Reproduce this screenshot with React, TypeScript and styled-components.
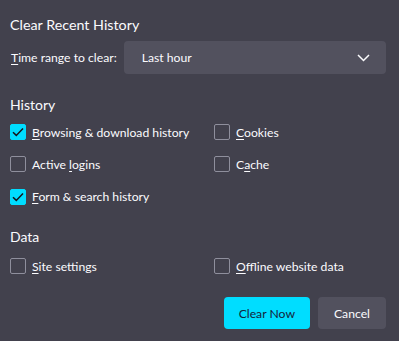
import React from 'react';
import styled, { createGlobalStyle } from 'styled-components';

const GlobalStyle = createGlobalStyle`
  html, body {
    margin: 0;
    background: #42414d;
  }
  body {
    font-family: Lato, "Open Sans", sans-serif;
    color: #fbfbfe;
  }
`;

const Dialog = styled.div`
  width: 399px;
  height: 341px;
  box-sizing: border-box;
  padding: 14px 13px 0 10px;
  display: flex;
  flex-direction: column;
`;

const Title = styled.h1`
  margin: 0;
  font-size: 14.3px;
  font-weight: 400;
  line-height: 22px;
`;

const TimeRow = styled.div`
  display: flex;
  align-items: center;
  gap: 7px;
  margin-top: 5px;
`;

const Label = styled.span`
  font-size: 12.2px;
  padding-left: 1px;
`;

const Select = styled.div`
  flex: 1;
  height: 33px;
  box-sizing: border-box;
  background: #52515e;
  border-radius: 4px;
  display: flex;
  align-items: center;
  justify-content: space-between;
  padding: 0 16px 0 18px;
  font-size: 12.2px;
`;

const SectionTitle = styled.h2<{ $gap: number }>`
  margin: ${p => p.$gap}px 0 0;
  font-size: 14px;
  font-weight: 400;
  line-height: 20px;
`;

const OptionGrid = styled.div<{ $gap: number }>`
  display: grid;
  grid-template-columns: 204px 1fr;
  grid-auto-rows: 32.3px;
  margin-top: ${p => p.$gap}px;
`;

const Option = styled.label`
  display: flex;
  align-items: center;
  gap: 6px;
  font-size: 12.2px;
`;

const Box = styled.span<{ $checked?: boolean }>`
  width: 16px;
  height: 16px;
  box-sizing: border-box;
  border-radius: 2px;
  border: 1px solid ${p => (p.$checked ? '#00ddff' : '#8f8f9d')};
  background: ${p => (p.$checked ? '#00ddff' : 'transparent')};
  display: flex;
  align-items: center;
  justify-content: center;
  flex-shrink: 0;
`;

const Key = styled.u`
  text-underline-offset: 2px;
`;

const Buttons = styled.div`
  display: flex;
  justify-content: flex-end;
  gap: 8px;
  margin-top: 15px;
`;

const Button = styled.button<{ $primary?: boolean }>`
  height: 32px;
  border: none;
  border-radius: 4px;
  font-family: inherit;
  font-size: 12.2px;
  padding: 0 ${p => (p.$primary ? 15 : 16)}px;
  background: ${p => (p.$primary ? '#00ddff' : '#52515e')};
  color: ${p => (p.$primary ? '#15223a' : '#fbfbfe')};
`;

const Check = () => (
  <svg width="12" height="10" viewBox="0 0 12 10">
    <path d="M1 5.2 L4.3 8.4 L11 1.4" fill="none" stroke="#15141a" strokeWidth="1.5" />
  </svg>
);

const Chevron = () => (
  <svg width="13" height="8" viewBox="0 0 13 8">
    <path d="M1 1 L6.5 6.5 L12 1" fill="none" stroke="#fbfbfe" strokeWidth="1.5" />
  </svg>
);

type Item = { pre: string; key: string; post: string; checked?: boolean };

const history: (Item | null)[] = [
  { pre: '', key: 'B', post: 'rowsing & download history', checked: true },
  { pre: '', key: 'C', post: 'ookies' },
  { pre: 'Active ', key: 'l', post: 'ogins' },
  { pre: 'C', key: 'a', post: 'che' },
  { pre: '', key: 'F', post: 'orm & search history', checked: true },
  null,
];

const data: Item[] = [
  { pre: '', key: 'S', post: 'ite settings' },
  { pre: '', key: 'O', post: 'ffline website data' },
];

const renderItem = (item: Item | null, i: number) =>
  item ? (
    <Option key={i}>
      <Box $checked={item.checked}>{item.checked && <Check />}</Box>
      <span>
        {item.pre}
        <Key>{item.key}</Key>
        {item.post}
      </span>
    </Option>
  ) : (
    <span key={i} />
  );

export default function App() {
  return (
    <>
      <GlobalStyle />
      <Dialog>
        <Title>Clear Recent History</Title>
        <TimeRow>
          <Label>
            <Key>T</Key>ime range to clear:
          </Label>
          <Select>
            <span>Last hour</span>
            <Chevron />
          </Select>
        </TimeRow>
        <SectionTitle $gap={21}>History</SectionTitle>
        <OptionGrid $gap={1}>{history.map(renderItem)}</OptionGrid>
        <SectionTitle $gap={14}>Data</SectionTitle>
        <OptionGrid $gap={3}>{data.map(renderItem)}</OptionGrid>
        <Buttons>
          <Button $primary>Clear Now</Button>
          <Button>Cancel</Button>
        </Buttons>
      </Dialog>
    </>
  );
}
